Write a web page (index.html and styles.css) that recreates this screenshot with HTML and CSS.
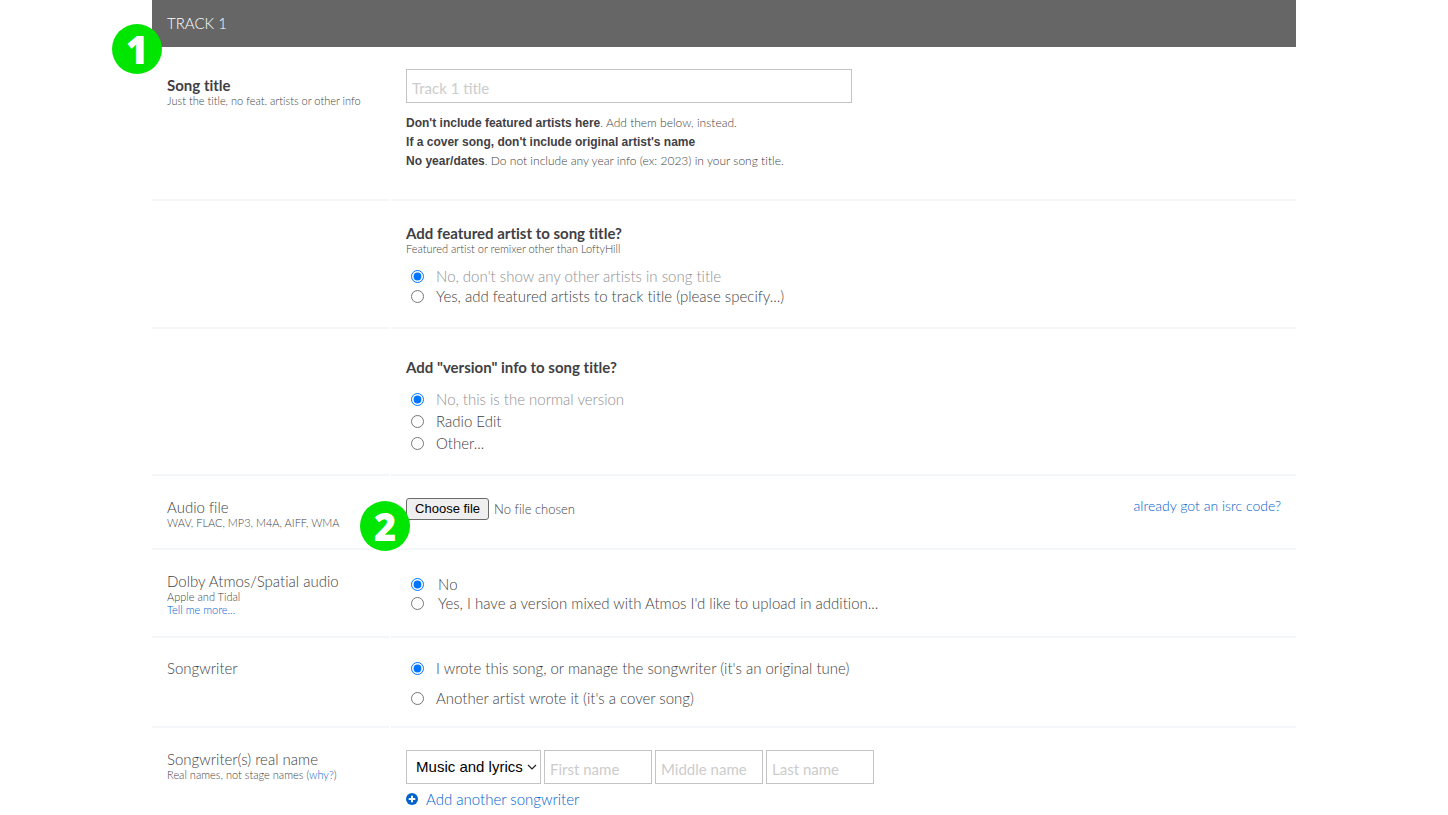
FILE: index.html
```
<!DOCTYPE html>
<html lang="en">
<head>
<meta charset="utf-8">
<title>Track 1</title>
<link rel="stylesheet" href="styles.css">
</head>
<body>
<form class="track">
  <header class="track-header">
    <h1 class="track-name">TRACK 1</h1>
    <span class="badge badge-header">1</span>
  </header>

  <section class="row">
    <div class="cell cell-title">
      <label class="label strong" for="title">Song title</label>
      <p class="hint">Just the title, no feat. artists or other info</p>
    </div>
    <div class="cell cell-fields">
      <input class="field field-title" id="title" type="text" placeholder="Track 1 title">
      <ul class="notes">
        <li><b>Don't include featured artists here</b>. Add them below, instead.</li>
        <li><b>If a cover song, don't include original artist's name</b></li>
        <li><b>No year/dates</b>. Do not include any year info (ex: 2023) in your song title.</li>
      </ul>
    </div>
  </section>

  <section class="row">
    <div class="cell"></div>
    <div class="cell cell-featured">
      <h2 class="label strong">Add featured artist to song title?</h2>
      <p class="hint">Featured artist or remixer other than LoftyHill</p>
      <div class="options options-featured">
        <label class="option muted"><input type="radio" name="featured" checked>No, don't show any other artists in song title</label>
        <label class="option"><input type="radio" name="featured">Yes, add featured artists to track title (please specify...)</label>
      </div>
    </div>
  </section>

  <section class="row">
    <div class="cell"></div>
    <div class="cell cell-version">
      <h2 class="label strong">Add "version" info to song title?</h2>
      <div class="options options-version">
        <label class="option muted"><input type="radio" name="version" checked>No, this is the normal version</label>
        <label class="option"><input type="radio" name="version">Radio Edit</label>
        <label class="option"><input type="radio" name="version">Other...</label>
      </div>
    </div>
  </section>

  <section class="row">
    <div class="cell">
      <label class="label" for="audio">Audio file</label>
      <p class="hint">WAV, FLAC, MP3, M4A, AIFF, WMA</p>
    </div>
    <div class="cell cell-fields cell-audio">
      <div class="upload">
        <input class="file-input" id="audio" type="file" accept="audio/*" tabindex="-1">
        <button class="file-button" type="button" onclick="document.getElementById('audio').click()">Choose file</button>
        <span class="file-name">No file chosen</span>
      </div>
      <a class="isrc" href="#">already got an isrc code?</a>
      <span class="badge badge-audio">2</span>
    </div>
  </section>

  <section class="row">
    <div class="cell cell-atmos">
      <h2 class="label">Dolby Atmos/Spatial audio</h2>
      <p class="hint">Apple and Tidal</p>
      <p class="hint"><a href="#">Tell me more...</a></p>
    </div>
    <div class="cell">
      <div class="options options-atmos">
        <label class="option"><input type="radio" name="atmos" checked>No</label>
        <label class="option"><input type="radio" name="atmos">Yes, I have a version mixed with Atmos I'd like to upload in addition...</label>
      </div>
    </div>
  </section>

  <section class="row">
    <div class="cell cell-writer">
      <h2 class="label">Songwriter</h2>
    </div>
    <div class="cell cell-writer">
      <div class="options options-writer">
        <label class="option"><input type="radio" name="writer" checked>I wrote this song, or manage the songwriter (it's an original tune)</label>
        <label class="option"><input type="radio" name="writer">Another artist wrote it (it's a cover song)</label>
      </div>
    </div>
  </section>

  <section class="row row-last">
    <div class="cell">
      <h2 class="label">Songwriter(s) real name</h2>
      <p class="hint">Real names, not stage names (<a href="#">why?</a>)</p>
    </div>
    <div class="cell cell-fields">
      <div class="names">
        <div class="role-wrap">
          <select class="role" aria-label="Role"><option>Music and lyrics</option><option>Music</option><option>Lyrics</option></select>
          <svg class="chevron" viewBox="0 0 10 6" aria-hidden="true"><path d="M1 1l4 4 4-4"/></svg>
        </div>
        <input class="field field-name" type="text" placeholder="First name" aria-label="First name">
        <input class="field field-name" type="text" placeholder="Middle name" aria-label="Middle name">
        <input class="field field-name" type="text" placeholder="Last name" aria-label="Last name">
      </div>
      <a class="add" href="#"><svg class="plus" viewBox="0 0 12 12" aria-hidden="true"><circle cx="6" cy="6" r="6"/><path d="M6 2.700v6.600M2.700 6h6.600"/></svg>Add another songwriter</a>
    </div>
  </section>
</form>
</body>
</html>
```
FILE: styles.css
```
* { box-sizing: border-box; }
body {
  margin: 0;
  background: #fff;
  color: #3f3f44;
  font: 300 15px/20px Lato, "Liberation Sans", sans-serif;
  font-variant-ligatures: none;
  overflow: hidden;
}
h1, h2, p, ul { margin: 0; padding: 0; font-size: inherit; font-weight: inherit; }
a { color: #0062cc; text-decoration: none; }

.track { width: 79%; margin: 0 auto; }
.track-header {
  position: relative;
  padding: 13px 15px 14px;
  background: #666;
  color: #fff;
}
.track-name { font-size: 15px; line-height: 20px; }

.row { display: grid; grid-template-columns: 237px 1fr; column-gap: 2px; }
.cell { padding: 21px 15px 19px; border-bottom: 2px solid #f3f7f9; }
.row-last .cell { border-bottom: 0; padding-bottom: 0; }
.cell-title { padding-top: 28px; }
.cell-fields { padding-top: 22px; }
.cell-featured { padding-top: 22px; padding-bottom: 21px; }
.cell-version { padding-top: 28px; padding-bottom: 21px; }
.cell-atmos { padding-bottom: 20px; }
.cell-writer { padding-top: 20px; padding-bottom: 18px; }

.label { display: block; line-height: 20px; }
.strong { font-weight: 700; }
.hint { font-size: 11px; line-height: 13px; margin-top: -1px; }
.hint + .hint { margin-top: 0; }

.field {
  height: 34px;
  padding: 4px 5px 0;
  border: 1px solid #c4c4c4;
  border-radius: 0;
  background: #fff;
  color: inherit;
  font: 400 15px/20px Lato, "Liberation Sans", sans-serif;
}
.field::placeholder { color: #ccc; opacity: 1; }
.field-title { display: block; width: 51%; }

.notes { margin-top: 10px; padding-bottom: 10px; list-style: none; font-size: 12px; line-height: 19px; }
.notes b { font: 700 12px/12px "Liberation Sans", Arial, sans-serif; }

.options { display: flex; flex-direction: column; align-items: flex-start; }
.option { display: flex; align-items: center; }
.option input { width: 13px; height: 13px; margin: 0 12px 0 5px; }
.muted { color: #909094; }
.options-featured { margin-top: 11px; }
.options-version { margin-top: 12px; gap: 2px; }
.options-atmos { margin-top: 4px; line-height: 19px; }
.options-atmos .option input { margin-right: 14px; }
.options-writer { gap: 10px; }

.cell-audio { position: relative; display: flex; justify-content: space-between; align-items: flex-start; }
.upload { display: flex; align-items: center; gap: 5px; }
.file-input { position: absolute; width: 1px; height: 1px; opacity: 0; pointer-events: none; }
.file-button {
  height: 22px;
  padding: 0 8px;
  border: 1px solid #6b6b6b;
  border-radius: 3px;
  background: #efefef;
  color: #000;
  font: 400 13px/20px "Liberation Sans", Arial, sans-serif;
}
.file-name { font-size: 13px; }
.isrc { font-size: 14px; line-height: 16px; }

.badge {
  position: absolute;
  width: 50px;
  height: 50px;
  border-radius: 50%;
  background: #00e600;
  color: #fff;
  font: 800 38px/50px "Open Sans", sans-serif;
  text-align: center;
}
.badge-header { left: -40px; top: 24px; }
.badge-audio { left: -31px; top: 25px; }

.names { display: flex; gap: 3px; }
.role-wrap { position: relative; }
.role {
  appearance: none;
  width: 135px;
  height: 34px;
  padding: 0 12px 0 9px;
  border: 1px solid #c4c4c4;
  border-radius: 0;
  background: #fff;
  color: #000;
  font: 400 15px/20px "Liberation Sans", Arial, sans-serif;
}
.chevron { position: absolute; right: 4px; top: 14px; width: 10px; height: 6px; fill: none; stroke: #222; stroke-width: 1.2; pointer-events: none; }
.field-name { width: 108px; }
.add { display: inline-flex; align-items: center; gap: 8px; margin-top: 5px; }
.plus { width: 12px; height: 12px; fill: #0062cc; }
.plus path { stroke: #fff; stroke-width: 2; }
```
